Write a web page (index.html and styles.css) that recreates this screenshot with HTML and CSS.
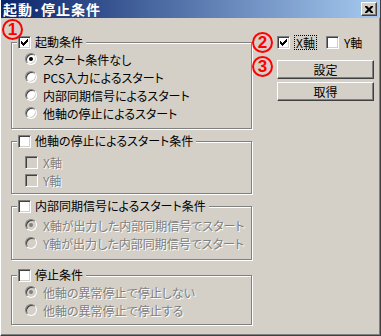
FILE: index.html
```html
<!doctype html>
<html lang="ja">
	<head>
		<meta charset="UTF-8">
		<title>起動･停止条件</title>
		<link rel="stylesheet" href="styles.css">
	</head>

	<body>
		<div class="window">
			<div class="titlebar">
				<span class="title">起動･停止条件</span>
				<span class="close">
					<svg width="8" height="7" viewBox="0 0 8 7"><path d="M0 0h2l2 2 2-2h2v1l-2.5 2.5 2.5 2.5v1h-2l-2-2-2 2h-2v-1l2.5-2.5-2.5-2.5z" fill="#000"/></svg>
				</span>
			</div>

			<div class="content">
				<div class="left">
					<fieldset class="group group-start">
						<legend><span class="cb checked"></span>起動条件</legend>
						<div class="opt"><span class="rb on"></span>スタート条件なし</div>
						<div class="opt"><span class="rb"></span>PCS入力によるスタート</div>
						<div class="opt"><span class="rb"></span>内部同期信号によるスタート</div>
						<div class="opt"><span class="rb"></span>他軸の停止によるスタート</div>
					</fieldset>

					<fieldset class="group group-axis">
						<legend><span class="cb"></span>他軸の停止によるスタート条件</legend>
						<div class="opt off"><span class="cb"></span>X軸</div>
						<div class="opt off"><span class="cb"></span>Y軸</div>
					</fieldset>

					<fieldset class="group group-sync">
						<legend><span class="cb"></span>内部同期信号によるスタート条件</legend>
						<div class="opt off"><span class="rb on"></span>X軸が出力した内部同期信号でスタート</div>
						<div class="opt off"><span class="rb"></span>Y軸が出力した内部同期信号でスタート</div>
					</fieldset>

					<fieldset class="group group-stop">
						<legend><span class="cb"></span>停止条件</legend>
						<div class="opt off"><span class="rb on"></span>他軸の異常停止で停止しない</div>
						<div class="opt off"><span class="rb"></span>他軸の異常停止で停止する</div>
					</fieldset>
				</div>

				<div class="right">
					<div class="axes">
						<span class="axis"><span class="cb checked"></span><span class="focus">X軸</span></span>
						<span class="axis"><span class="cb"></span>Y軸</span>
					</div>
					<button class="btn">設定</button>
					<button class="btn">取得</button>
				</div>
			</div>

			<!-- red note marks drawn over the dialog -->
			<span class="mark mark-1">1</span>
			<span class="mark mark-2">2</span>
			<span class="mark mark-3">3</span>
		</div>
	</body>
</html>
```

FILE: styles.css
```css
* {
	padding: 0;
	margin: 0;
	box-sizing: border-box;
}
body {
	background-color: #d4d0c8;
	font-family: "Noto Sans CJK JP", "Noto Sans", sans-serif;
	font-size: 12px;
	font-feature-settings: "palt";
	color: #000;
}
.window {
	position: relative;
	width: 381px;
	height: 336px;
	background-color: #d4d0c8;
	border-left: 1px solid #fff;
	border-right: 1px solid #404040;
	border-bottom: 1px solid #404040;
	box-shadow: inset -1px -1px 0 #808080;
}
.titlebar {
	display: flex;
	align-items: center;
	justify-content: space-between;
	height: 18px;
	padding: 0 3px 0 2px;
	background: linear-gradient(to right, #0a246a, #a6caf0);
}
.title {
	color: #fff;
	font-weight: bold;
	font-size: 14px;
	letter-spacing: 1px;
	line-height: 18px;
}
.close {
	display: flex;
	align-items: center;
	justify-content: center;
	width: 16px;
	height: 14px;
	background-color: #d4d0c8;
	border-top: 1px solid #fff;
	border-left: 1px solid #fff;
	border-right: 1px solid #404040;
	border-bottom: 1px solid #404040;
	box-shadow: inset -1px -1px 0 #808080;
}
.content {
	display: flex;
	padding: 17px 0 0 10px;
}
.left {
	width: 242px;
}
.group {
	width: 241px;
	border: 1px solid #808080;
	box-shadow: 1px 1px 0 #fff, inset 1px 1px 0 #fff;
	padding: 1px 0 6px 0;
	margin-bottom: 5px;
}
.group-axis {
	padding-top: 5px;
	padding-bottom: 4px;
}
.group-sync {
	padding-top: 3px;
	padding-bottom: 7px;
	margin-bottom: 8px;
}
.group-stop {
	padding-bottom: 5px;
}
.group legend {
	display: flex;
	align-items: center;
	height: 14px;
	margin-left: 5px;
	padding: 0 3px 0 1px;
	background-color: #d4d0c8;
	line-height: 14px;
	white-space: nowrap;
}
.group legend .cb {
	margin-right: 4px;
}
.opt {
	display: flex;
	align-items: center;
	height: 18px;
	margin-left: 13px;
	white-space: nowrap;
}
.opt.off {
	color: #808080;
	text-shadow: 1px 1px 0 #fff;
}
.cb {
	display: inline-flex;
	align-items: center;
	justify-content: center;
	flex: none;
	width: 13px;
	height: 13px;
	margin-right: 5px;
	background-color: #fff;
	border-top: 1px solid #808080;
	border-left: 1px solid #808080;
	border-right: 1px solid #fff;
	border-bottom: 1px solid #fff;
	box-shadow: inset 1px 1px 0 #404040, inset -1px -1px 0 #d4d0c8;
}
.opt.off .cb {
	background-color: #d4d0c8;
}
.cb.checked::after {
	content: "";
	width: 7px;
	height: 7px;
	background: url("data:image/svg+xml;utf8,<svg xmlns='http://www.w3.org/2000/svg' width='7' height='7' shape-rendering='crispEdges'><path d='M6 0h1v3h-1v1h-1v1h-1v1h-1v1h-1v-1h-1v-1h-1v-3h1v1h1v1h1v-1h1v-1h1z' fill='black'/></svg>") no-repeat;
}
.rb {
	display: inline-flex;
	align-items: center;
	justify-content: center;
	flex: none;
	width: 12px;
	height: 12px;
	margin-right: 6px;
	border-radius: 50%;
	background-color: #fff;
	border: 1px solid;
	border-color: #808080 #fff #fff #808080;
	box-shadow: inset 1px 1px 0 #404040, inset -1px -1px 0 #d4d0c8;
}
.opt.off .rb {
	background-color: #d4d0c8;
}
.rb.on::after {
	content: "";
	width: 4px;
	height: 4px;
	border-radius: 50%;
	background-color: #000;
}
.opt.off .rb.on::after {
	background-color: #808080;
}
.right {
	display: flex;
	flex-direction: column;
	margin-left: 24px;
	width: 97px;
}
.axes {
	display: flex;
	align-items: center;
	height: 14px;
	gap: 10px;
}
.axis {
	display: flex;
	align-items: center;
	white-space: nowrap;
}
.focus {
	outline: 1px dotted #000;
	outline-offset: 0;
	padding: 0 1px;
	line-height: 13px;
}
.btn {
	width: 97px;
	height: 19px;
	margin-top: 3px;
	font-family: inherit;
	font-size: 12px;
	background-color: #d4d0c8;
	border-top: 1px solid #fff;
	border-left: 1px solid #fff;
	border-right: 1px solid #404040;
	border-bottom: 1px solid #404040;
	box-shadow: inset -1px -1px 0 #808080;
}
.axes + .btn {
	margin-top: 11px;
}
.mark {
	position: absolute;
	display: flex;
	align-items: center;
	justify-content: center;
	width: 21px;
	height: 21px;
	border: 2px solid #f00;
	border-radius: 50%;
	color: #f00;
	font-family: "Liberation Sans", sans-serif;
	font-weight: bold;
	font-size: 17px;
	line-height: 1;
}
.mark-1 {
	top: 19px;
	left: 1px;
}
.mark-2 {
	top: 32px;
	left: 251px;
}
.mark-3 {
	top: 56px;
	left: 251px;
}
```
